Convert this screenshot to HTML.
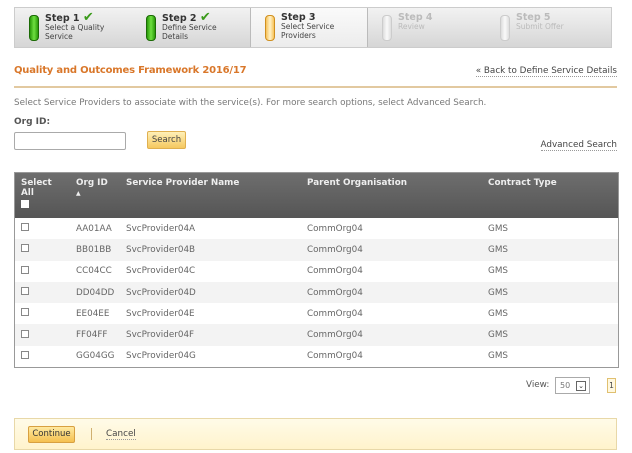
<!DOCTYPE html>
<html><head><style>
*{margin:0;padding:0;box-sizing:border-box}
body{width:632px;height:453px;background:#fff;font-family:"DejaVu Sans","Liberation Sans",sans-serif;position:relative;overflow:hidden;color:#555}
.a{position:absolute}
.steps{left:14px;top:7px;width:598px;height:41px;border:1px solid #ccc;background:linear-gradient(#f2f2f2,#d6d6d6);}
.st{position:absolute;top:0;height:39px;width:118px;font-size:7.5px;line-height:8.5px;color:#444}
.st b{font-size:9.5px;display:block;line-height:11px;margin-top:4px;color:#333}
.pill{position:absolute;left:14px;top:7px;width:10px;height:26px;border-radius:4px}
.txt{position:absolute;left:30px;top:0}
.g{background:linear-gradient(90deg,#2a9a0a,#6fe040,#2a9a0a);border:1px solid #1b6a05}
.o{background:linear-gradient(90deg,#f7c35a,#fff1c8,#f7c35a);border:1px solid #d09020}
.w{background:linear-gradient(90deg,#ddd,#fafafa,#ddd);border:1px solid #ccc}
.ck{color:#3a9a1a;font-size:13px}
table{border-collapse:collapse;width:603px;font-size:8.8px}
th{color:#eee;text-align:left;font-weight:bold;vertical-align:top;padding:5px 0 0 6px;height:45px;background:linear-gradient(#6e6e6e,#555)}
td{height:21.3px;padding-left:6px;color:#666}
tr:nth-child(odd) td{background:#f3f3f3}
.cb{display:inline-block;width:8px;height:8px;border:1px solid #888;background:#fff}
</style></head><body>
<div class="a steps">
 <div class="st" style="left:0"><div class="pill g"></div><div class="txt"><b>Step 1 <span class="ck">✔</span></b>Select a Quality<br>Service</div></div>
 <div class="st" style="left:117px"><div class="pill g"></div><div class="txt"><b>Step 2 <span class="ck">✔</span></b>Define Service<br>Details</div></div>
 <div class="st" style="left:235px;width:118px;background:linear-gradient(#fafafa,#ececec);border-left:1px solid #bbb;border-right:1px solid #bbb"><div class="pill o"></div><div class="txt"><b>Step 3</b>Select Service<br>Providers</div></div>
 <div class="st" style="left:353px;color:#bbb"><div class="pill w"></div><div class="txt"><b style="color:#bbb">Step 4</b>Review</div></div>
 <div class="st" style="left:471px;color:#bbb"><div class="pill w"></div><div class="txt"><b style="color:#bbb">Step 5</b>Submit Offer</div></div>
</div>
<div class="a" style="left:14px;top:65px;font-size:10px;font-weight:bold;color:#d9772a;letter-spacing:-0.2px">Quality and Outcomes Framework 2016/17</div>
<div class="a" style="right:15px;top:66px;font-size:8.8px;color:#444;border-bottom:1px dotted #999">« Back to Define Service Details</div>
<div class="a" style="left:14px;top:86px;width:603px;height:2px;background:#e2c9a0"></div>
<div class="a" style="left:14px;top:98px;font-size:8.8px;color:#777">Select Service Providers to associate with the service(s). For more search options, select Advanced Search.</div>
<div class="a" style="left:14px;top:117px;font-size:9px;font-weight:bold;color:#555">Org ID:</div>
<div class="a" style="left:14px;top:132px;width:112px;height:18px;border:1px solid #aaa;border-radius:2px"></div>
<div class="a" style="left:147px;top:131px;width:39px;height:18px;border:1px solid #e0b050;border-radius:2px;background:linear-gradient(#fff0b8,#f5c860);font-size:8.5px;text-align:center;line-height:16px;color:#444">Search</div>
<div class="a" style="right:15px;top:140px;font-size:8.8px;color:#444;border-bottom:1px dotted #999">Advanced Search</div>
<div class="a" style="left:14px;top:172px;border:1px solid #999">
<table>
<tr><th style="width:55px">Select<br>All<br><span class="cb" style="border:none;margin-top:2px"></span></th><th style="width:50px">Org ID<br><span style="font-size:6px">▲</span></th><th style="width:181px">Service Provider Name</th><th style="width:181px">Parent Organisation</th><th>Contract Type</th></tr>
<tr><td><span class="cb"></span></td><td>AA01AA</td><td>SvcProvider04A</td><td>CommOrg04</td><td>GMS</td></tr>
<tr><td><span class="cb"></span></td><td>BB01BB</td><td>SvcProvider04B</td><td>CommOrg04</td><td>GMS</td></tr>
<tr><td><span class="cb"></span></td><td>CC04CC</td><td>SvcProvider04C</td><td>CommOrg04</td><td>GMS</td></tr>
<tr><td><span class="cb"></span></td><td>DD04DD</td><td>SvcProvider04D</td><td>CommOrg04</td><td>GMS</td></tr>
<tr><td><span class="cb"></span></td><td>EE04EE</td><td>SvcProvider04E</td><td>CommOrg04</td><td>GMS</td></tr>
<tr><td><span class="cb"></span></td><td>FF04FF</td><td>SvcProvider04F</td><td>CommOrg04</td><td>GMS</td></tr>
<tr><td><span class="cb"></span></td><td>GG04GG</td><td>SvcProvider04G</td><td>CommOrg04</td><td>GMS</td></tr>
</table></div>
<div class="a" style="left:526px;top:380px;font-size:8.8px;color:#555">View:</div>
<div class="a" style="left:555px;top:377px;width:35px;height:17px;border:1px solid #aaa;font-size:8px;color:#777;padding:3px 0 0 4px">50<span style="position:absolute;right:3px;top:3px;width:10px;height:10px;border:1px solid #666;font-size:7px;line-height:8px;text-align:center;color:#333">⌄</span></div>
<div class="a" style="left:607px;top:378px;width:9px;height:15px;border:1px solid #e0c070;background:#fff8e0;font-size:7.5px;text-align:center;line-height:13px;color:#444">1</div>
<div class="a" style="left:14px;top:418px;width:603px;height:32px;border:1px solid #e8d8a8;background:linear-gradient(#fffbe8,#fff3cc)"></div>
<div class="a" style="left:28px;top:426px;width:47px;height:17px;border:1px solid #d8a040;border-radius:2px;background:linear-gradient(#ffe9a0,#f5c050);font-size:8.5px;text-align:center;line-height:15px;color:#333">Continue</div>
<div class="a" style="left:91px;top:428px;width:1px;height:12px;background:#d0b070"></div>
<div class="a" style="left:106px;top:429px;font-size:8.8px;color:#444;border-bottom:1px dotted #999">Cancel</div>
</body></html>
